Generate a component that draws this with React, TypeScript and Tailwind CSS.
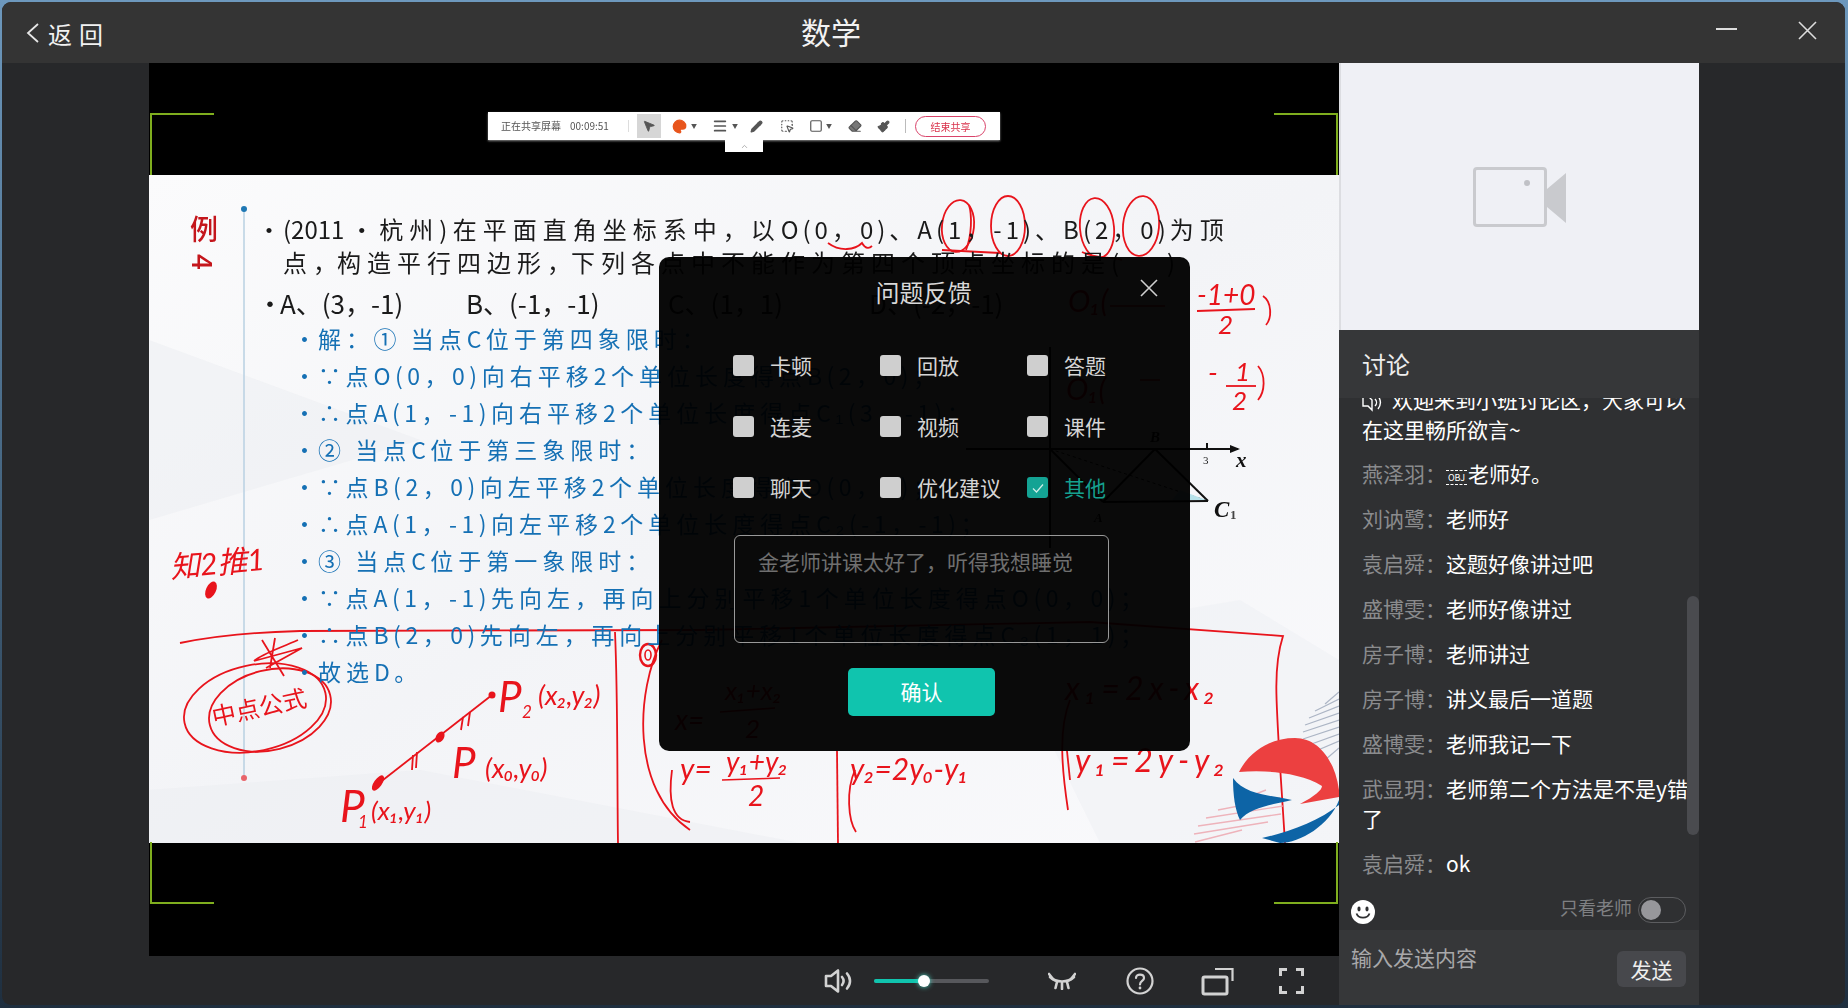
import { useState } from 'react';
import { Pencil, Eraser, Paintbrush, MousePointer2, SquareDashedMousePointer, Square, Palette, Menu, ChevronUp } from 'lucide-react';

const messages: { name: string; text: string; obj?: boolean }[] = [
  { name: '燕泽羽：', text: '老师好。', obj: true },
  { name: '刘讷鹭：', text: '老师好' },
  { name: '袁启舜：', text: '这题好像讲过吧' },
  { name: '盛博雯：', text: '老师好像讲过' },
  { name: '房子博：', text: '老师讲过' },
  { name: '房子博：', text: '讲义最后一道题' },
  { name: '盛博雯：', text: '老师我记一下' },
  { name: '武显玥：', text: '老师第二个方法是不是y错了' },
  { name: '袁启舜：', text: 'ok' },
];

const options = ['卡顿', '回放', '答题', '连麦', '视频', '课件', '聊天', '优化建议', '其他'];

const blueRows = [
  '解：① 当点C位于第四象限时：',
  '∵点O(0，0)向右平移2个单位长度得点B(2，0)；',
  '∴点A(1，-1)向右平移2个单位长度得点C₁(3，-1)；',
  '② 当点C位于第三象限时：',
  '∵点B(2，0)向左平移2个单位长度得点O(0，0)；',
  '∴点A(1，-1)向左平移2个单位长度得点C₂(-1，-1)；',
  '③ 当点C位于第一象限时：',
  '∵点A(1，-1)先向左，再向上分别平移1个单位长度得点O(0，0)；',
  '∴点B(2，0)先向左，再向上分别平移1个单位长度得点C₃(1，1)；',
  '故选D。',
];

// 汉字和西文字距分开给
function Spaced({ text, track, latin = '' }: { text: string; track: string; latin?: string }) {
  return (
    <>
      {text.split(/([\u4e00-\u9fff]+)/).map((part, i) =>
        i % 2 === 1 ? (
          <span key={i} className={track}>{part}</span>
        ) : (
          <span key={i} className={`whitespace-pre ${latin}`}>{part}</span>
        ),
      )}
    </>
  );
}

// 课件上的手写批注和坐标图，坐标直接用整页像素
function SlideOverlay() {
  const ink = '#e8141c';
  return (
    <svg className="absolute inset-0 h-full w-full" viewBox="149 175 1190 668" fill="none">
      {/* 底纹 */}
      <path d="M149 340 L420 440 L149 520 Z" fill="#eceef2" opacity="0.5" />
      <path d="M149 790 L420 770 L800 843 L149 843 Z" fill="#eceef2" opacity="0.5" />
      <path d="M1000 640 L1240 600 L1339 660 L1339 843 L1100 843 Z" fill="#eceef2" opacity="0.4" />

      {/* 左侧竖线 */}
      <line x1="244" y1="209" x2="244" y2="778" stroke="#b9d0e2" strokeWidth="1.5" />
      <circle cx="244" cy="209" r="3" fill="#1f78b4" />
      <circle cx="244" cy="778" r="3" fill="#e8646a" />

      {/* 坐标图 */}
      <g stroke="#111" strokeWidth="2">
        <line x1="966" y1="449" x2="1238" y2="449" />
        <line x1="1050" y1="347" x2="1050" y2="548" />
        <line x1="1050" y1="449" x2="1103" y2="502" />
        <line x1="1103" y1="502" x2="1155" y2="449" />
        <line x1="1155" y1="449" x2="1208" y2="501" />
        <line x1="1103" y1="502" x2="1208" y2="501" />
        <line x1="1050" y1="449" x2="1208" y2="501" strokeDasharray="3 3" strokeWidth="1" />
        <line x1="1207" y1="443" x2="1207" y2="449" />
      </g>
      <path d="M1180 490 L1206 500 L1172 500 Z" fill="#b8e2ea" />
      <path d="M1230 445 L1240 449 L1230 453 Z" fill="#111" />
      <g fill="#111" fontFamily="'Liberation Serif', serif" fontStyle="italic" fontWeight="700">
        <text x="1236" y="467" fontSize="21">x</text>
        <text x="1214" y="517" fontSize="23">C</text>
        <text x="1230" y="519" fontSize="13" fontStyle="normal" fill="#444">1</text>
        <text x="1150" y="442" fontSize="15">B</text>
        <text x="1094" y="522" fontSize="13">A</text>
      </g>
      <text x="1203" y="464" fontSize="11" fill="#222" fontFamily="'Liberation Serif', serif">3</text>

      {/* 题干上的圈 */}
      <g stroke={ink} strokeWidth="1.8">
        <ellipse cx="958" cy="226" rx="16" ry="26" transform="rotate(6 958 226)" />
        <ellipse cx="1008" cy="226" rx="17" ry="30" />
        <ellipse cx="1097" cy="228" rx="17" ry="30" transform="rotate(-5 1097 228)" />
        <ellipse cx="1141" cy="226" rx="18" ry="30" transform="rotate(5 1141 226)" />
        <path d="M828 243 C840 252 855 250 862 243 C866 250 870 248 872 246" />
        <path d="M942 250 L1000 253" />
        <path d="M1082 252 C1095 259 1115 257 1122 260" />
        <path d="M969 205 C972 215 972 235 966 250" />
        <path d="M1197 311 L1255 309" />
        <path d="M1263 296 C1272 302 1272 318 1266 325" />
        <path d="M1226 386 L1256 386" />
        <path d="M1258 366 C1266 375 1265 392 1258 400" />

        {/* 长横线和方框 */}
        <path d="M180 643 C220 635 260 632 300 631 L700 630 L1090 622 L1283 636 C1272 670 1276 700 1285 843" />
        <path d="M615 632 C618 700 617 780 618 843" />
        <path d="M837 751 L838 843" />
        <path d="M1067 751 L1070 780" />

        {/* 中点公式的圈 */}
        <ellipse cx="255" cy="708" rx="72" ry="43" transform="rotate(-12 255 708)" />
        <ellipse cx="270" cy="710" rx="62" ry="40" transform="rotate(-14 270 710)" />
        <path d="M254 661 L302 648 L266 668 M262 640 L284 676 M275 638 L270 668 M254 661 C262 654 275 650 298 640" />

        {/* 两点连线 */}
        <path d="M374 787 L492 695" />
        <path d="M413 755 L412 770 M417 752 L416 768 M463 717 L461 730 M470 712 L468 726" />

        <path d="M662 640 C636 690 630 790 690 830" />
        <path d="M672 770 C668 800 672 820 690 822" />
        <path d="M855 770 C846 790 848 820 856 832" />
        <path d="M1070 700 C1058 730 1062 770 1068 810" />
      </g>
      <ellipse cx="648" cy="655" rx="8" ry="11" stroke={ink} strokeWidth="2.4" />
      <ellipse cx="648" cy="655" rx="3" ry="5" stroke={ink} strokeWidth="1.6" />
      <circle cx="492" cy="695" r="3.5" fill={ink} />
      <ellipse cx="440" cy="737" rx="4" ry="6" fill={ink} transform="rotate(30 440 737)" />
      <ellipse cx="378" cy="783" rx="4" ry="9" fill={ink} transform="rotate(35 378 783)" />
      <ellipse cx="211" cy="590" rx="5" ry="9" fill={ink} transform="rotate(25 211 590)" />

      {/* 手写文字 */}
      <g fill={ink} fontFamily="'Lato', 'Noto Sans CJK SC', sans-serif" fontStyle="italic" fontWeight="400">
        <text x="171" y="578" fontSize="30" transform="rotate(-5 171 578)">知2推1</text>
        <text x="214" y="726" fontSize="24" transform="rotate(-12 214 726)" fontStyle="normal">中点公式</text>
        <text x="498" y="712" fontSize="42">P</text>
        <text x="522" y="718" fontSize="17">2</text>
        <text x="538" y="705" fontSize="27">(x₂,y₂)</text>
        <text x="452" y="778" fontSize="42">P</text>
        <text x="485" y="778" fontSize="27">(x₀,y₀)</text>
        <text x="340" y="822" fontSize="44">P</text>
        <text x="358" y="828" fontSize="17">1</text>
        <text x="371" y="820" fontSize="26">(x₁,y₁)</text>
        <text x="675" y="730" fontSize="28">x=</text>
        <text x="725" y="700" fontSize="26">x₁+x₂</text>
        <text x="745" y="738" fontSize="26">2</text>
        <text x="680" y="780" fontSize="30">y=</text>
        <text x="726" y="772" fontSize="28">y₁+y₂</text>
        <text x="748" y="806" fontSize="28">2</text>
        <text x="850" y="780" fontSize="30">y₂=2y₀-y₁</text>
        <text x="850" y="705" fontSize="28">x₂=2x-x₁</text>
        <text x="1065" y="700" fontSize="32" textLength={150}>x₁=2x-x₂</text>
        <text x="1075" y="772" fontSize="32" textLength={150}>y₁=2y-y₂</text>
        <text x="1068" y="312" fontSize="30">O₁(</text>
        <text x="1066" y="400" fontSize="30">O₁(</text>
        <text x="1197" y="305" fontSize="28">-1+0</text>
        <text x="1218" y="334" fontSize="26">2</text>
        <text x="1208" y="383" fontSize="28">-</text>
        <text x="1235" y="381" fontSize="26">1</text>
        <text x="1232" y="410" fontSize="26">2</text>
      </g>
      <path d="M720 712 L775 708 M722 780 L780 778 M1110 306 L1165 306 M1140 380 L1160 380" stroke={ink} strokeWidth="1.6" />

      {/* 右下角 logo */}
      <g stroke="#8f9bb0" strokeWidth="1.2" opacity="0.7">
        {[696, 703, 710, 717, 724, 731, 738, 745, 752].map((y, i) => (
          <line key={y} x1={1339 - [14, 24, 30, 34, 36, 36, 33, 28, 14][i]} y1={y + 8} x2="1339" y2={y - 4} />
        ))}
      </g>
      <g stroke="#eda3ac" strokeWidth="1.4" opacity="0.8">
        {[802, 810, 818, 826, 834, 842].map((y, i) => (
          <line key={y} x1={[1235, 1218, 1206, 1198, 1194, 1195][i]} y1={y} x2={[1266, 1280, 1283, 1281, 1268, 1242][i]} y2={y - 12} />
        ))}
      </g>
      <path d="M1239 772 C1250 750 1272 738 1295 738 C1318 738 1335 760 1339 790 L1339 797 L1300 804 C1315 796 1322 790 1322 786 C1300 772 1265 770 1239 772 Z" fill="#ec4040" />
      <path d="M1233 778 C1245 795 1270 795 1292 800 C1270 805 1250 808 1240 820 C1235 810 1233 795 1233 778 Z" fill="#0d64a6" />
      <path d="M1339 800 C1330 825 1300 843 1280 843 L1262 838 C1290 832 1320 820 1339 805 Z" fill="#0d64a6" />
    </svg>
  );
}

function ShareToolbar() {
  return (
    <div className="relative ml-[339px] flex h-[28px] w-[512px] items-center bg-white text-[#555] shadow-[0_1px_2px_#888] blur-[0.3px]">
      <span className="ml-[13px] w-[62px] text-[10px] leading-none whitespace-nowrap">正在共享屏幕</span>
      <span className="ml-[7px] text-[10px] leading-none">00:09:51</span>
      <div className="ml-[19px] h-[12px] w-px bg-[#ddd]" />
      <div className="ml-[8px] flex h-[24px] w-[24px] items-center justify-center bg-[#d6d6d6]">
        <MousePointer2 size={14} fill="#555" strokeWidth={1.5} />
      </div>
      <Palette size={15} className="ml-[11px] text-[#e8551c]" fill="#e8551c" />
      <span className="ml-[4px] text-[6px] leading-none">▼</span>
      <Menu size={16} className="ml-[15px]" strokeWidth={2.6} />
      <span className="ml-[4px] text-[6px] leading-none">▼</span>
      <Pencil size={13} className="ml-[12px]" fill="#555" />
      <SquareDashedMousePointer size={14} className="ml-[17px]" />
      <Square size={14} className="ml-[15px]" />
      <span className="ml-[3px] text-[6px] leading-none">▼</span>
      <Eraser size={14} className="ml-[16px]" fill="#777" />
      <Paintbrush size={13} className="ml-[15px]" fill="#555" />
      <div className="ml-[15px] h-[14px] w-px bg-[#bbb]" />
      <div className="ml-[9px] flex h-[21px] w-[71px] items-center justify-center rounded-full border border-[#d9436a] text-[10px] text-[#d9334c]">
        结束共享
      </div>
      <div className="absolute left-[237px] top-[28px] flex h-[12px] w-[38px] items-center justify-center bg-white">
        <ChevronUp size={9} className="text-[#999]" />
      </div>
    </div>
  );
}

function Slide() {
  return (
    <div className="relative h-[668px] overflow-hidden bg-gradient-to-br from-[#fbfbfc] via-[#f3f4f7] to-[#fafafc] text-[#1a1a1a] blur-[0.4px]">
      <SlideOverlay />
      <div className="absolute left-[41px] top-[36px] flex flex-col items-center text-[28px] leading-[34px] font-medium text-[#c4161c]">
        <span>例</span>
        <span className="rotate-90">4</span>
      </div>
      <div className="relative pl-[108px] pt-[37px] text-[24px] leading-[33px]">
        <div className="flex h-[33px] whitespace-nowrap">
          <span className="w-[26px]">•</span>
          <span>
            <Spaced text="(2011 · 杭州) " track="tracking-[6px]" />
            <Spaced text="在平面直角坐标系中，以O(0，0)、A(1，-1)、B(2，0)为顶" track="tracking-[6px]" latin="tracking-[4px]" />
          </span>
        </div>
        <div className="h-[33px] pl-[26px] whitespace-nowrap">
          <Spaced text="点，构造平行四边形，下列各点中不能作为第四个顶点坐标的是(　　)" track="tracking-[6px]" />
        </div>
        <div className="mt-[8px] flex h-[33px] text-[26px] whitespace-nowrap">
          <span className="w-[23px]">•</span>
          <span className="w-[186px]">A、(3，-1)</span>
          <span className="w-[202px]">B、(-1，-1)</span>
          <span className="w-[201px]">C、(1，1)</span>
          <span>D、(-2，-1)</span>
        </div>
      </div>
      <div className="relative mt-px pl-[144px] text-[23px] leading-[37px] text-[#1570b4]">
        {blueRows.map((row) => (
          <div key={row} className="flex h-[37px] whitespace-nowrap">
            <span className="w-[25px]">•</span>
            <span><Spaced text={row} track="tracking-[5px]" latin="tracking-[4.5px]" /></span>
          </div>
        ))}
      </div>
    </div>
  );
}

function CornerMarks() {
  return (
    <>
      <div className="absolute left-px top-[50px] h-[62px] w-[64px] border-l-2 border-t-2 border-[#7fae1e]" />
      <div className="absolute right-px top-[50px] h-[62px] w-[64px] border-r-2 border-t-2 border-[#7fae1e]" />
      <div className="absolute bottom-[52px] left-px h-[62px] w-[64px] border-b-2 border-l-2 border-[#7fae1e]" />
      <div className="absolute bottom-[52px] right-px h-[62px] w-[64px] border-b-2 border-r-2 border-[#7fae1e]" />
    </>
  );
}

function FeedbackDialog() {
  const [note] = useState('金老师讲课太好了，听得我想睡觉');
  return (
    <div className="absolute left-[510px] top-[194px] h-[494px] w-[531px] rounded-[10px] bg-black/[0.96]">
      <div className="relative pt-[20px] text-center text-[24px] leading-[30px] text-[#d8d8d8]">
        <span className="relative left-[-1px]">问题反馈</span>
        <svg className="absolute right-[32px] top-[22px] h-[18px] w-[18px]" viewBox="0 0 18 18" stroke="#cfcfcf" strokeWidth="1.6">
          <path d="M1 1 L17 17 M17 1 L1 17" />
        </svg>
      </div>
      <div className="ml-[74px] mt-[43px] grid grid-cols-[147px_147px_147px] gap-y-[30px]">
        {options.map((item) => {
          const active = item === '其他';
          return (
            <div key={item} className="flex h-[31px] items-center">
              <span className={`flex h-[21px] w-[21px] items-center justify-center rounded-[3px] ${active ? 'bg-[#14a394]' : 'bg-[#cfcfcf]'}`}>
                {active && (
                  <svg className="h-[14px] w-[14px]" viewBox="0 0 14 14" fill="none" stroke="#cfeee9" strokeWidth="1.2">
                    <path d="M2 7.5 L5.5 11 L12 3.5" />
                  </svg>
                )}
              </span>
              <span className={`ml-[16px] whitespace-nowrap text-[21px] leading-[31px] ${active ? 'text-[#15a08f]' : 'text-[#d5d5d5]'}`}>{item}</span>
            </div>
          );
        })}
      </div>
      <div className="ml-[75px] mt-[32px] h-[108px] w-[375px] rounded-[6px] border border-[#999] px-[23px] py-[8px] text-[21px] leading-[34px] whitespace-nowrap text-[#6f6f6f]">
        {note}
      </div>
      <button className="ml-[189px] mt-[25px] flex h-[48px] w-[147px] items-center justify-center rounded-[5px] bg-[#10c4ae] text-[21px] text-white">
        确认
      </button>
    </div>
  );
}

function ControlBar() {
  return (
    <div className="flex h-[49px] items-center text-[#d2d2d2]">
      <svg className="ml-[675px] h-[26px] w-[30px]" viewBox="0 0 30 26" fill="none" stroke="currentColor" strokeWidth="2.6">
        <path d="M2 8 H7 L14 2.5 V23.5 L7 18 H2 Z" strokeLinejoin="round" />
        <path d="M18 9 C20 11.5 20 14.5 18 17" strokeLinecap="round" />
        <path d="M23 5.5 C27 10 27 16 23 20.5" strokeLinecap="round" />
      </svg>
      <div className="relative ml-[20px] h-[4px] w-[115px] rounded-full bg-[#57585c]">
        <div className="h-full w-[50px] rounded-full bg-[#10c4ae]" />
        <div className="absolute left-[44px] top-[-4px] h-[12px] w-[12px] rounded-full bg-white shadow-[0_0_5px_#4fe0cc]" />
      </div>
      <svg className="ml-[59px] h-[18px] w-[28px]" viewBox="0 0 28 18" fill="none" stroke="currentColor" strokeWidth="2.6" strokeLinecap="round">
        <path d="M2 5 C8 11 20 11 26 5" />
        <path d="M1 2 L5 7 M27 2 L23 7 M9 10 L7.5 16 M14 11 V17 M19 10 L20.5 16" />
      </svg>
      <svg className="ml-[50px] h-[28px] w-[28px]" viewBox="0 0 28 28" fill="none" stroke="currentColor" strokeWidth="2.2">
        <circle cx="14" cy="14" r="12.5" />
        <path d="M10 11 C10 6.5 18 6.5 18 11 C18 14 14 14 14 17.5" strokeLinecap="round" />
        <circle cx="14" cy="21" r="1.4" fill="currentColor" stroke="none" />
      </svg>
      <svg className="ml-[47px] h-[30px] w-[34px]" viewBox="0 0 34 30" fill="none" stroke="currentColor" strokeWidth="3">
        <rect x="2" y="11" width="24" height="17" rx="1.5" />
        <path d="M14 3 H31.5 V15" strokeWidth="2.2" />
      </svg>
      <svg className="ml-[44px] h-[26px] w-[25px]" viewBox="0 0 25 26" fill="none" stroke="currentColor" strokeWidth="3">
        <path d="M1.5 8 V1.5 H8 M17 1.5 H23.5 V8 M23.5 18 V24.5 H17 M8 24.5 H1.5 V18" />
      </svg>
    </div>
  );
}

function ChatPanel() {
  return (
    <div className="flex h-[942px] w-[360px] flex-col">
      {/* 摄像头占位 */}
      <div className="flex h-[267px] shrink-0 items-center justify-center border-l-[2px] border-[#dcdde1] bg-[#eff0f5]">
        <svg className="h-[60px] w-[94px]" viewBox="0 0 94 60" fill="none">
          <rect x="1.5" y="1.5" width="71" height="57" rx="2.5" stroke="#c9cace" strokeWidth="3" />
          <circle cx="54" cy="16" r="3" fill="#c0c1c6" />
          <path d="M74 22 L93 6 V56 L74 40 Z" fill="#c9cace" />
        </svg>
      </div>
      <div className="flex h-[68px] shrink-0 items-center bg-[#363739] pl-[23px] text-[24px] text-[#eeeeee]">讨论</div>
      {/* 消息列表 */}
      <div className="relative h-[477px] shrink-0 overflow-hidden bg-[#2f3032] pl-[23px] pr-[10px] text-[21px] leading-[30px] text-white">
        <div className="mt-[-14px]">
          <div className="mb-[14px]">
            <svg className="mr-[9px] inline-block h-[21px] w-[21px] align-[-4px]" viewBox="0 0 21 21" fill="none" stroke="#fff" strokeWidth="1.4">
              <path d="M1 6 H7 L10 9 V19 L6 15 H1 Z" />
              <path d="M13 8 C15 10 15 13 13 15 M16 5 C19 9 19 14 16 18" />
            </svg>
            欢迎来到小班讨论区，大家可以在这里畅所欲言~
          </div>
          {messages.map((msg, i) => (
            <div key={i} className="mb-[15px] break-all">
              <span className="text-[#8a8b8d]">{msg.name}</span>
              {msg.obj && (
                <span className="mr-px inline-flex h-[15px] w-[21px] items-center justify-center border-x-0 border-y border-dashed border-white align-[1px] text-[9px] leading-none">
                  OBJ
                </span>
              )}
              {msg.text}
            </div>
          ))}
        </div>
        <div className="absolute right-0 top-[198px] h-[239px] w-[12px] rounded-full bg-[#4a4b4f]" />
      </div>
      <div className="flex h-[55px] shrink-0 items-start bg-[#2f3032]">
        <svg className="ml-[12px] mt-[25px] h-[24px] w-[24px]" viewBox="0 0 24 24">
          <circle cx="12" cy="12" r="12" fill="#fff" />
          <ellipse cx="8" cy="9" rx="1.6" ry="2.4" fill="#2f3032" />
          <ellipse cx="16" cy="9" rx="1.6" ry="2.4" fill="#2f3032" />
          <path d="M5.5 13.5 C7.5 19 16.5 19 18.5 13.5" fill="none" stroke="#2f3032" strokeWidth="1.8" />
        </svg>
        <span className="ml-[185px] mt-[19px] text-[18px] leading-[26px] text-[#7f8083]">只看老师</span>
        <div className="ml-[6px] mt-[22px] flex h-[26px] w-[48px] items-center rounded-full border border-[#5c5d60] pl-[2px]">
          <div className="h-[20px] w-[20px] rounded-full bg-[#97979b]" />
        </div>
      </div>
      <div className="flex min-h-0 flex-1 items-start bg-[#363739]">
        <span className="ml-[12px] mt-[12px] text-[21px] leading-[30px] text-[#a8a8aa]">输入发送内容</span>
        <button className="ml-[140px] mt-[21px] h-[36px] w-[69px] rounded-[6px] bg-[#47484c] text-[21px] leading-[36px] text-[#eeeeee]">发送</button>
      </div>
    </div>
  );
}

export default function App() {
  return (
    <div className="h-[1008px] w-[1848px] overflow-hidden bg-gradient-to-b from-[#6d98bd] via-[#44647f] to-[#1f2f3f] pb-[3px] pl-[2px] pr-[3px] pt-[2px] font-['Noto_Sans_CJK_SC','Liberation_Sans',sans-serif]">
      <div className="flex h-full flex-col overflow-hidden rounded-[9px] bg-[#27282a]">
        {/* 标题栏 */}
        <div className="relative flex h-[61px] shrink-0 items-center bg-[#343434] text-white">
          <svg className="ml-[24px] h-[20px] w-[14px]" viewBox="0 0 14 20" fill="none" stroke="#e6e6e6" strokeWidth="1.8">
            <path d="M12 1 L2 10 L12 19" />
          </svg>
          <span className="ml-[8px] mt-[2px] text-[24px] leading-none tracking-[7px] text-[#f2f2f2]">返回</span>
          <span className="mb-[4px] ml-[691px] text-[30px] leading-none text-[#f2f2f2]">数学</span>
          <div className="absolute left-[1714px] top-[26px] h-[2px] w-[21px] bg-[#dddddd]" />
          <svg className="absolute left-[1796px] top-[19px] h-[19px] w-[19px]" viewBox="0 0 19 19" stroke="#dddddd" strokeWidth="1.6">
            <path d="M1 1 L18 18 M18 1 L1 18" />
          </svg>
        </div>
        <div className="flex min-h-0 flex-1">
          <div className="w-[147px] shrink-0" />
          <div className="w-[1190px] shrink-0">
            <div className="relative h-[893px] bg-black">
              <div className="h-[112px] pt-[49px]">
                <ShareToolbar />
              </div>
              <Slide />
              <CornerMarks />
              <FeedbackDialog />
            </div>
            <ControlBar />
          </div>
          <ChatPanel />
        </div>
      </div>
    </div>
  );
}
